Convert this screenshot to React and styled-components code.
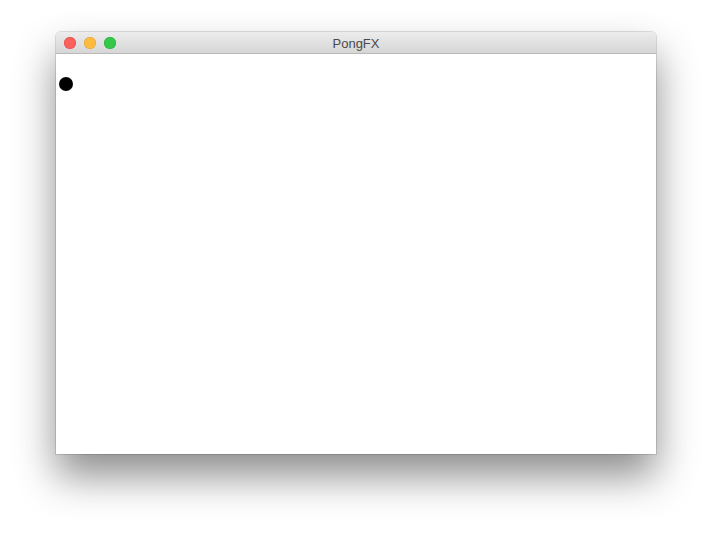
import React from "react";
import styled, { createGlobalStyle } from "styled-components";

const GlobalStyle = createGlobalStyle`
  html, body {
    margin: 0;
    padding: 0;
    background: #ffffff;
  }
  body {
    font-family: "Liberation Sans", Arial, sans-serif;
  }
`;

const Page = styled.div`
  width: 712px;
  height: 534px;
  padding: 32px 0 0 56px;
  box-sizing: border-box;
  background: #ffffff;
  overflow: hidden;
`;

const Window = styled.div`
  width: 600px;
  height: 422px;
  display: flex;
  flex-direction: column;
  border-radius: 5px 5px 0 0;
  box-shadow: 0 22px 40px rgba(0, 0, 0, 0.45), 0 0 0 1px rgba(0, 0, 0, 0.12);
  background: #ffffff;
`;

const TitleBar = styled.div`
  height: 22px;
  flex-shrink: 0;
  display: flex;
  align-items: center;
  padding-left: 8px;
  position: relative;
  border-radius: 5px 5px 0 0;
  background: linear-gradient(#ececec, #d6d6d6);
  border-bottom: 1px solid #b9b9b9;
  box-sizing: border-box;
`;

const Lights = styled.div`
  display: flex;
  gap: 8px;
`;

const Light = styled.span`
  width: 12px;
  height: 12px;
  border-radius: 50%;
  background: ${(p) => p.color};
  box-shadow: inset 0 0 0 0.5px ${(p) => p.edge};
`;

const Title = styled.div`
  position: absolute;
  left: 0;
  right: 0;
  top: 4px;
  text-align: center;
  font-size: 13px;
  color: #4a4a4a;
  pointer-events: none;
`;

const Canvas = styled.div`
  flex: 1;
  position: relative;
  background: #ffffff;
`;

const Ball = styled.div`
  position: absolute;
  left: 3px;
  top: 23px;
  width: 14px;
  height: 14px;
  border-radius: 50%;
  background: #000000;
`;

export default function App() {
  return (
    <>
      <GlobalStyle />
      <Page>
        <Window>
          <TitleBar>
            <Lights>
              <Light color="#fc605c" edge="#de4a45" />
              <Light color="#fdbc40" edge="#de9f34" />
              <Light color="#34c84a" edge="#27a83a" />
            </Lights>
            <Title>PongFX</Title>
          </TitleBar>
          <Canvas>
            <Ball />
          </Canvas>
        </Window>
      </Page>
    </>
  );
}
